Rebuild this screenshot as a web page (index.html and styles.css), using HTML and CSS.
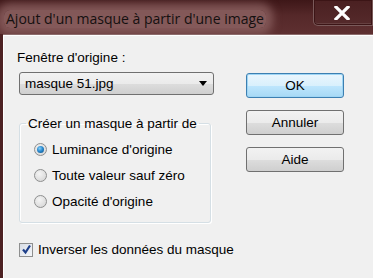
FILE: index.html
```html
<!DOCTYPE html>
<html lang="fr">
<head>
  <meta charset="UTF-8">
  <title>Ajout d'un masque</title>
  <link rel="stylesheet" href="styles.css">
</head>
<body>
  <div class="window">
    <div class="titlebar">
      <span class="title">Ajout d'un masque à partir d'une image</span>
      <div class="close-btn">
        <svg width="16" height="14" viewBox="0 0 16 14">
          <path d="M2 1 L14 13 M14 1 L2 13" stroke="#fff" stroke-width="3.2" stroke-linecap="square"/>
        </svg>
      </div>
    </div>

    <div class="client">
      <div class="main-col">
        <label class="field-label">Fenêtre d'origine :</label>
        <div class="select">
          <span>masque 51.jpg</span>
          <span class="arrow"></span>
        </div>

        <fieldset class="group">
          <legend>Créer un masque à partir de</legend>
          <div class="radio-row"><span class="radio checked"></span>Luminance d'origine</div>
          <div class="radio-row"><span class="radio"></span>Toute valeur sauf zéro</div>
          <div class="radio-row"><span class="radio"></span>Opacité d'origine</div>
        </fieldset>

        <div class="check-row">
          <span class="checkbox">
            <svg width="11" height="11" viewBox="0 0 11 11">
              <path d="M2 5.5 L4.5 8.5 L9 1.5" fill="none" stroke="#1d3f8a" stroke-width="2.2"/>
            </svg>
          </span>
          Inverser les données du masque
        </div>
      </div>

      <div class="btn-col">
        <button class="btn default">OK</button>
        <button class="btn">Annuler</button>
        <button class="btn">Aide</button>
      </div>
    </div>
  </div>
</body>
</html>
```

FILE: styles.css
```css
body {
  margin: 0;
  width: 373px;
  height: 278px;
  overflow: hidden;
  font-family: "Liberation Sans", Arial, sans-serif;
  font-size: 13.5px;
  color: #000;
}

.window {
  height: 278px;
  background: #4d2223;
  padding: 0 0 0 3px;
  box-sizing: border-box;
  display: flex;
  flex-direction: column;
}

.titlebar {
  height: 34px;
  display: flex;
  align-items: flex-start;
  background: linear-gradient(180deg, #3e1718 0%, #552829 45%, #5e3031 100%);
  margin-left: -3px;
  padding-left: 4px;
  overflow: hidden;
}

.title {
  font-family: "Open Sans", "Liberation Sans", sans-serif;
  font-size: 14px;
  line-height: 18px;
  color: #141010;
  margin-top: 10px;
  padding: 0 2px;
  background: rgba(140, 98, 98, 0.85);
  border-radius: 6px;
  box-shadow: 0 0 9px 7px rgba(140, 98, 98, 0.8);
}

.close-btn {
  margin-left: auto;
  width: 60px;
  height: 26px;
  box-sizing: border-box;
  border: 1px solid #7a5a5a;
  border-top: none;
  border-radius: 0 0 0 5px;
  box-shadow: inset 0 0 0 1px #3c1516, inset 0 -2px 0 #664040;
  background: linear-gradient(180deg, #4a2021 0%, #552a2b 100%);
  display: flex;
  align-items: center;
  justify-content: center;
  padding-right: 2px;
}

.client {
  flex: 1;
  background: #f0f0f0;
  border-top: 1px solid #fff;
  border-left: 1px solid #fff;
  box-shadow: 0 -1px 0 #8c6c6c;
  margin-top: 1px;
  display: flex;
  padding: 15px 0 0 13px;
}

.main-col {
  width: 200px;
  display: flex;
  flex-direction: column;
}

.field-label {
  display: block;
  height: 14px;
  line-height: 14px;
}

.select {
  margin: 7px 0 0 2px;
  width: 195px;
  height: 23px;
  box-sizing: border-box;
  border: 1px solid #707070;
  border-radius: 3px;
  background: linear-gradient(180deg, #f2f2f2 0%, #ebebeb 50%, #dddddd 51%, #cfcfcf 100%);
  display: flex;
  align-items: center;
  padding: 0 6px 0 5px;
}

.select .arrow {
  margin-left: auto;
  width: 0;
  height: 0;
  border-left: 4px solid transparent;
  border-right: 4px solid transparent;
  border-top: 5px solid #000;
}

.group {
  margin: 21px 0 0 2px;
  width: 192px;
  height: 107px;
  box-sizing: border-box;
  border: 1px solid #d5dfe5;
  border-radius: 3px;
  box-shadow: inset 1px 1px 0 #fff, 1px 1px 0 #fff;
  padding: 5px 0 0 14px;
}

.group legend {
  padding: 0 2px;
  margin-left: -8px;
}

.radio-row {
  display: flex;
  align-items: center;
  height: 26px;
  gap: 5px;
}

.radio {
  width: 13px;
  height: 13px;
  box-sizing: border-box;
  border-radius: 50%;
  border: 1px solid #8e8f8f;
  background: radial-gradient(circle at 40% 35%, #f4f4f4 0%, #dcdcdc 70%, #cfcfcf 100%);
  position: relative;
}

.radio.checked::after {
  content: "";
  position: absolute;
  left: 2px;
  top: 2px;
  width: 7px;
  height: 7px;
  border-radius: 50%;
  background: radial-gradient(circle at 40% 35%, #8ad1f7 0%, #2a8ad0 45%, #0b4a7e 100%);
}

.check-row {
  margin: 19px 0 0 2px;
  display: flex;
  align-items: center;
  gap: 5px;
  white-space: nowrap;
}

.checkbox {
  width: 14px;
  height: 14px;
  flex: none;
  box-sizing: border-box;
  border: 1px solid #8e8f8f;
  background: linear-gradient(135deg, #d8dde6 0%, #f4f6f9 100%);
  display: flex;
  align-items: center;
  justify-content: center;
}

.btn-col {
  margin-left: 29px;
  margin-top: 22px;
  display: flex;
  flex-direction: column;
  gap: 12px;
}

.btn {
  width: 98px;
  height: 25px;
  border: 1px solid #707070;
  border-radius: 3px;
  background: linear-gradient(180deg, #f2f2f2 0%, #ebebeb 50%, #dddddd 51%, #cfcfcf 100%);
  font-family: "Liberation Sans", Arial, sans-serif;
  font-size: 13.5px;
  color: #000;
  padding: 0;
}

.btn.default {
  border-color: #3c7fb1;
  background: linear-gradient(180deg, #eaf6fd 0%, #d9f0fc 50%, #bee6fd 51%, #a7d9f5 100%);
  box-shadow: inset 0 0 0 1px #9fd5f4;
}
```
